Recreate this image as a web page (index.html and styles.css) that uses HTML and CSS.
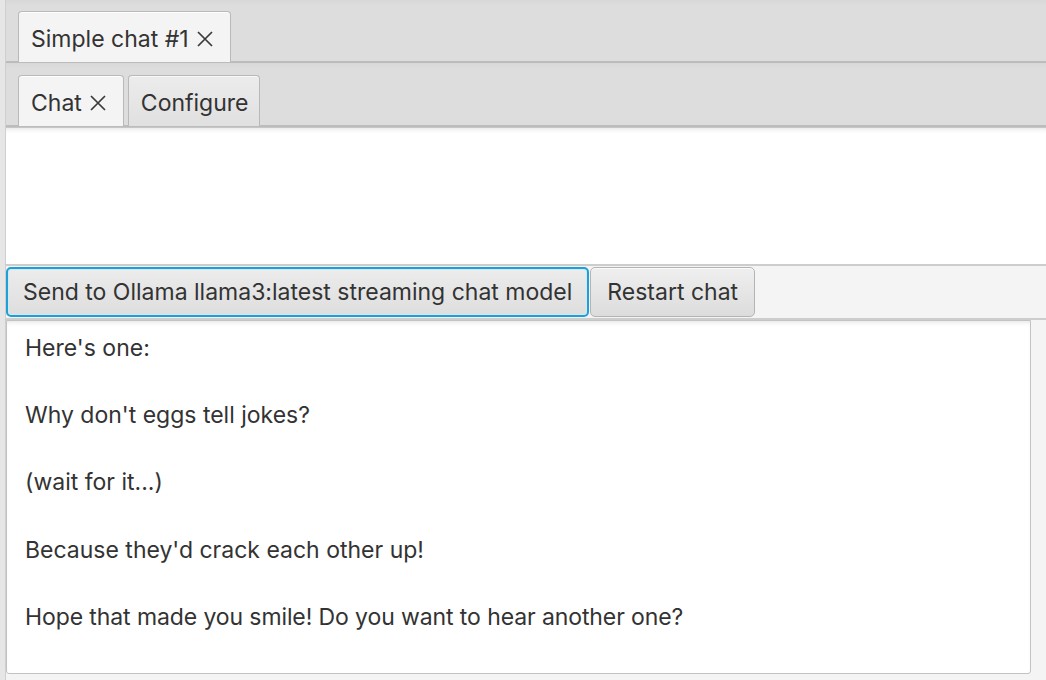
FILE: index.html
```html
<!DOCTYPE html>
<html>
<head>
<meta charset="utf-8">
<link rel="stylesheet" href="styles.css">
</head>
<body>
<div class="window">
  <div class="strip"></div>
  <div class="main">
    <div class="header outer-header">
      <div class="tab selected closable">
        <span class="tab-label">Simple chat #1</span>
        <svg class="close" viewBox="0 0 18 18" width="18" height="18"><path d="M2 2 L16 16 M16 2 L2 16" stroke="#3a3a3a" stroke-width="1.7" fill="none"/></svg>
      </div>
    </div>
    <div class="header inner-header">
      <div class="tab selected closable">
        <span class="tab-label">Chat</span>
        <svg class="close" viewBox="0 0 18 18" width="18" height="18"><path d="M2 2 L16 16 M16 2 L2 16" stroke="#3a3a3a" stroke-width="1.7" fill="none"/></svg>
      </div>
      <div class="tab">
        <span class="tab-label">Configure</span>
      </div>
    </div>
    <div class="content">
      <div class="input-area"></div>
      <div class="button-bar">
        <button class="btn focused">Send to Ollama llama3:latest streaming chat model</button>
        <button class="btn">Restart chat</button>
      </div>
      <div class="output-row">
        <div class="output">
          <p>Here's one:</p>
          <p>&nbsp;</p>
          <p>Why don't eggs tell jokes?</p>
          <p>&nbsp;</p>
          <p>(wait for it...)</p>
          <p>&nbsp;</p>
          <p>Because they'd crack each other up!</p>
          <p>&nbsp;</p>
          <p class="last">Hope that made you smile! Do you want to hear another one?</p>
        </div>
      </div>
    </div>
  </div>
</div>
</body>
</html>
```

FILE: styles.css
```css
* { box-sizing: border-box; }
html, body {
  margin: 0;
  padding: 0;
  width: 1046px;
  height: 680px;
  overflow: hidden;
  font-family: "Inter", "Liberation Sans", sans-serif;
  color: #333;
  background: #f4f4f4;
}
.window {
  display: flex;
  height: 680px;
}
.strip {
  width: 5px;
  background: #e6e6e6;
  flex: none;
}
.main {
  flex: 1;
  display: flex;
  flex-direction: column;
  border-left: 1px solid #cfcfcf;
}
.header {
  display: flex;
  align-items: flex-end;
  gap: 4px;
  padding-left: 12px;
  background: linear-gradient(#d8d8d8, #dddddd 6px, #dddddd);
  border-bottom: 2px solid #bcbcbc;
  flex: none;
}
.outer-header { height: 63px; }
.inner-header { height: 64px; }
.tab {
  height: 51px;
  display: flex;
  align-items: center;
  padding: 3px 10px 0 12px;
  gap: 7px;
  border: 1px solid #b9b9b9;
  border-bottom: none;
  border-radius: 4px 4px 0 0;
  background: linear-gradient(#ececec, #e0e0e0);
  box-shadow: inset 0 1px 0 #f8f8f8;
  font-size: 23px;
  margin-bottom: -1px;
}
.tab.closable { padding-right: 16px; }
.tab.selected {
  background: #f4f4f4;
  box-shadow: inset 0 1px 0 #ffffff;
}
.close { flex: none; margin-top: 1px; }
.content {
  flex: 1;
  display: flex;
  flex-direction: column;
  background: #f4f4f4;
}
.input-area {
  height: 137px;
  background: #fff;
  border-top: 1px solid #c6c6c6;
  box-shadow: inset 0 5px 5px -4px rgba(0,0,0,0.12);
  flex: none;
}
.button-bar {
  height: 56px;
  display: flex;
  align-items: stretch;
  gap: 1px;
  padding: 1px 0 1px 0;
  border-top: 2px solid #cdcdcd;
  border-bottom: 2px solid #cdcdcd;
  background: #f4f4f4;
  flex: none;
}
.btn {
  font-family: "Inter", "Liberation Sans", sans-serif;
  font-size: 23px;
  color: #333;
  padding: 0 16px;
  border: 1px solid #b4b4b4;
  border-radius: 5px;
  background: linear-gradient(#efefef, #dcdcdc);
  box-shadow: inset 0 1px 0 #fafafa;
}
.btn.focused {
  border: 2px solid #1e9fd6;
  box-shadow: inset 0 0 0 1px #cfe9f5;
  padding: 0 15px;
  background: linear-gradient(#ececec, #dedede);
}
.output-row {
  flex: 1;
  display: flex;
  padding-right: 15px;
  padding-bottom: 6px;
}
.output {
  flex: 1;
  background: #fff;
  border: 1px solid #c2c2c2;
  border-radius: 0 0 3px 3px;
  box-shadow: inset 0 4px 5px -3px rgba(0,0,0,0.12);
  padding: 11px 18px;
  font-size: 23px;
  line-height: 33.6px;
}
.output p { margin: 0; white-space: pre; }
.output p.last { letter-spacing: -0.1px; }
```
